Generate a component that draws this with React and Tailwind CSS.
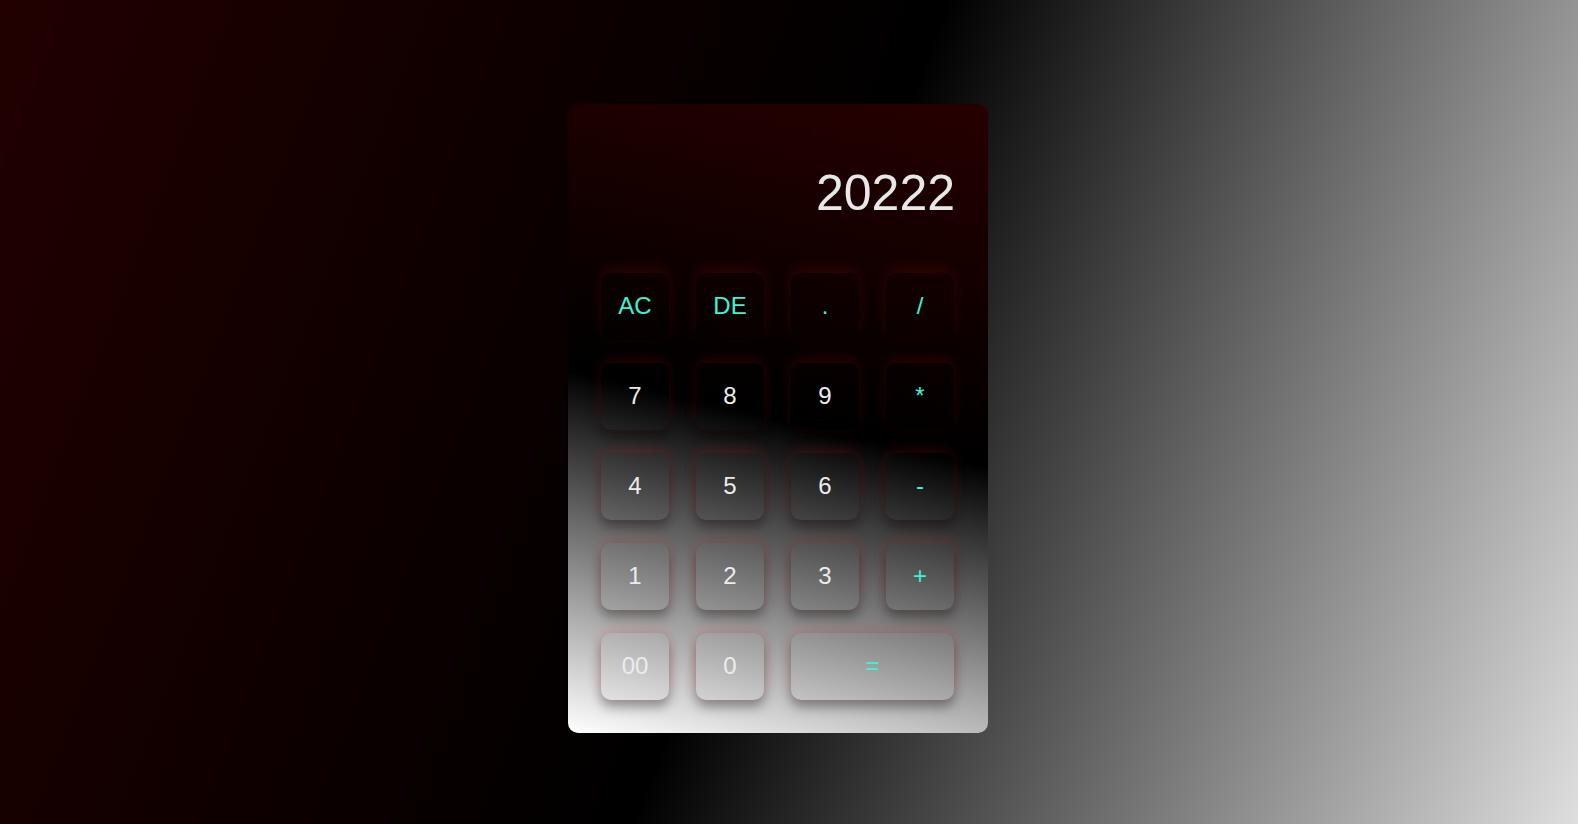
import React from "react";

const keys = [
  { label: "AC", op: true },
  { label: "DE", op: true },
  { label: ".", op: true },
  { label: "/", op: true },
  { label: "7" },
  { label: "8" },
  { label: "9" },
  { label: "*", op: true },
  { label: "4" },
  { label: "5" },
  { label: "6" },
  { label: "-", op: true },
  { label: "1" },
  { label: "2" },
  { label: "3" },
  { label: "+", op: true },
  { label: "00" },
  { label: "0" },
  { label: "=", op: true, wide: true },
];

function Key({ label, op, wide }) {
  return (
    <button
      className={
        "flex h-[67px] items-center justify-center rounded-[10px] bg-transparent text-[24px] shadow-[0_-4px_14px_rgba(255,30,30,0.14),0_7px_12px_rgba(0,0,0,0.35)] " +
        (wide ? "col-span-2 " : "") +
        (op ? "text-[#3cf3d4]" : "text-[#ececec]")
      }
    >
      {label}
    </button>
  );
}

export default function App() {
  return (
    <div
      className="flex h-screen w-full items-center justify-center bg-[linear-gradient(111deg,#220000_0%,#000000_50%,#dedede_100%)] pt-[12px] pr-[22px]"
      style={{ fontFamily: '"Liberation Sans", Arial, sans-serif' }}
    >
      {/* Calculator */}
      <div className="w-[420px] rounded-[10px] bg-[linear-gradient(193deg,#270000_0%,#000000_50%,#ffffff_100%)] p-[33px]">

        {/* Display */}
        <div className="h-[136px] pt-[27px] text-right text-[50px] leading-[58px] text-[#e8e8e8]">
          20222
        </div>

        {/* Keys */}
        <div className="grid grid-cols-[repeat(4,68px)] gap-x-[27px] gap-y-[23px]">
          {keys.map((k) => (
            <Key key={k.label} {...k} />
          ))}
        </div>

      </div>
    </div>
  );
}
